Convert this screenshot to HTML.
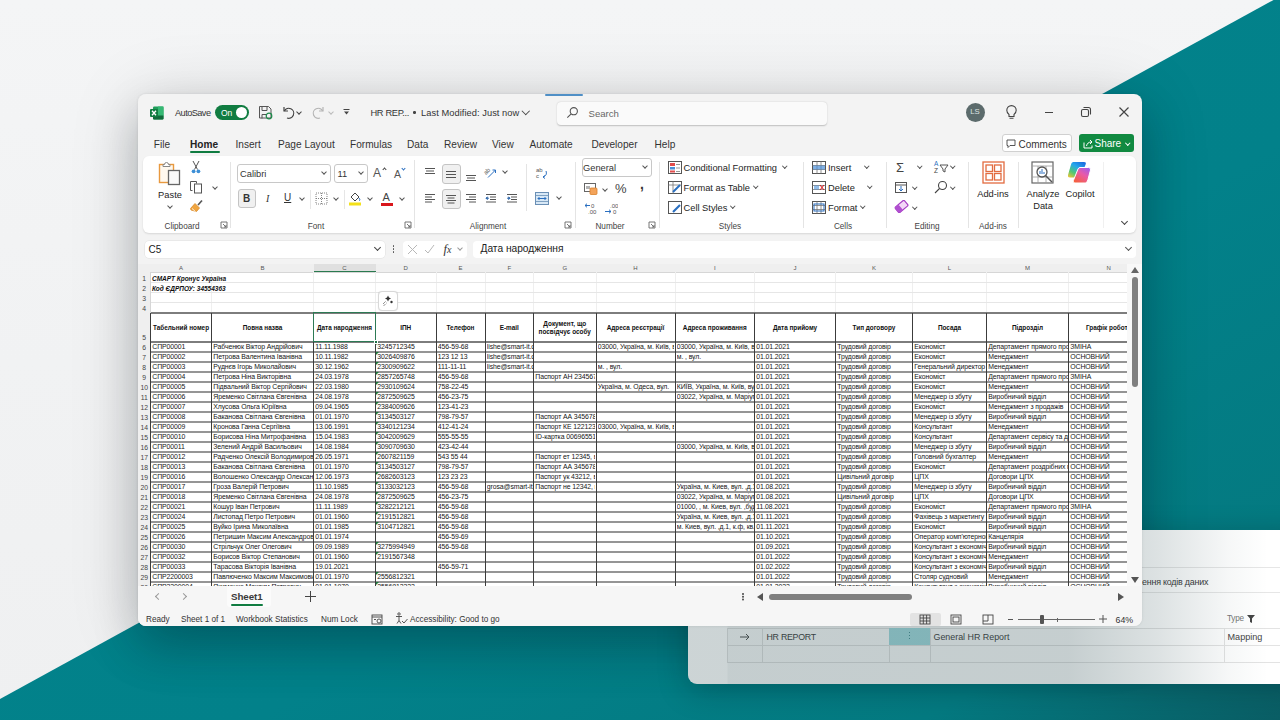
<!DOCTYPE html>
<html><head><meta charset="utf-8">
<style>
*{box-sizing:border-box;margin:0;padding:0}
html,body{width:1280px;height:720px;overflow:hidden}
body{position:relative;font-family:"Liberation Sans",sans-serif;background:linear-gradient(180deg,#f4f5f6 0%,#f1f2f3 50%,#eff0f1 100%);color:#242424}
.abs{position:absolute}
#teal{position:absolute;left:0;top:0;width:1280px;height:720px;background:linear-gradient(to bottom right,#03848c 0%,#02818a 60%,#047a81 86%,#0a5e65 100%);clip-path:polygon(1273.5px 0,1280px 0,1280px 720px,0 720px,0 699px)}
#back{position:absolute;left:688px;top:530px;width:620px;height:153.5px;background:#fff;border-radius:9px;overflow:hidden;box-shadow:0 6px 30px rgba(0,20,25,.28)}
#win{position:absolute;left:138px;top:94px;width:1004px;height:532px;background:#f3f3f3;border-radius:8px;overflow:hidden;box-shadow:0 0 3px rgba(0,0,0,.10)}
#winshadow{position:absolute;left:138px;top:94px;width:1004px;height:532px;border-radius:8px;box-shadow:0 6px 70px rgba(0,0,0,.15),0 22px 45px rgba(0,25,30,.22)}
.ui{position:absolute;white-space:nowrap;font-size:9.3px;color:#242424;line-height:1}
.tab{position:absolute;top:46px;font-size:10.1px;color:#333;line-height:1}
#ribbon{position:absolute;left:5px;top:62px;width:993px;height:77px;background:#fff;border-radius:6px;box-shadow:0 1px 2px rgba(0,0,0,.12)}
.glab{position:absolute;top:129px;font-size:8.2px;color:#444;line-height:1;transform:translateX(-50%);white-space:nowrap}
.sep{position:absolute;top:6px;width:1px;height:64px;background:#e4e4e4}
.rt{position:absolute;font-size:9.3px;color:#242424;line-height:1;white-space:nowrap}
.chev{position:absolute;width:5px;height:5px;border-right:1.1px solid #555;border-bottom:1.1px solid #555;transform:rotate(45deg)}
#grid{position:absolute;left:0;top:170px;width:989px;height:322px;overflow:hidden;background:#fff}
#grid div{position:absolute}
.ch{top:0;height:8px;font-size:6px;color:#555;text-align:center;line-height:8.5px}
.rh{left:0;width:12.5px;font-size:6.8px;color:#444;text-align:center;display:flex;align-items:flex-end;justify-content:center;padding-bottom:0;line-height:1}
.t{font-size:6.5px;line-height:12px;white-space:nowrap;color:#111}
.bi{font-weight:bold;font-style:italic}
.hd{display:flex;align-items:center;padding-top:1px;justify-content:center;text-align:center;font-size:6.4px;font-weight:bold;line-height:8px;color:#111;overflow:hidden;white-space:nowrap}
.c{font-size:6.9px;letter-spacing:-0.1px;line-height:10.5px;white-space:nowrap;overflow:hidden;color:#151515;height:11px}
.tri{width:0;height:0;border-top:3px solid #1e7a3c;border-right:3px solid transparent}
.hl{left:12.5px;width:980px;height:1px}
.lg{background:#e6e6e6}
.vl{width:1px}
.vl.lg{background:#efefef}
.hl.dk{background:#959595;height:1.5px}
.hl.dk.thick{background:#7d7d7d;height:1.6px}
.vl.dv{background:#3c3c3c}
</style></head><body>
<div id="teal"></div>
<div id="winshadow"></div>
<div id="back">
  <div class="abs" style="left:0;top:37px;width:600px;height:1px;background:#e6e6e6"></div>
  <div class="abs" style="left:0;top:62px;width:600px;height:1px;background:#e6e6e6"></div>
  <div class="abs" style="left:454px;top:47.5px;font-size:8.9px;letter-spacing:-0.2px;color:#3a3a3a;white-space:nowrap;line-height:1">ення кодів даних</div>
  <div class="abs" style="left:539px;top:85px;font-size:8.2px;color:#777;letter-spacing:-0.2px;white-space:nowrap;line-height:1">Type</div>
  <svg class="abs" style="left:558.5px;top:84.5px" width="8" height="8" viewBox="0 0 8 8"><path d="M0 0h8L5 3.5V8L3 7V3.5z" fill="#444"/></svg>
  <div class="abs" style="left:39px;top:97.5px;width:600px;height:1px;background:#e3e3e3"></div>
  <div class="abs" style="left:39px;top:115px;width:600px;height:1px;background:#e3e3e3"></div>
  <div class="abs" style="left:39px;top:132px;width:600px;height:1px;background:#e3e3e3"></div>
  <div class="abs" style="left:39px;top:98px;width:1px;height:34px;background:#e3e3e3"></div>
  <div class="abs" style="left:74px;top:98px;width:1px;height:34px;background:#e3e3e3"></div>
  <div class="abs" style="left:200.5px;top:98px;width:1px;height:34px;background:#e3e3e3"></div>
  <div class="abs" style="left:241.5px;top:98px;width:1px;height:34px;background:#e3e3e3"></div>
  <div class="abs" style="left:535.5px;top:98px;width:1px;height:34px;background:#e3e3e3"></div>
  <div class="abs" style="left:200.5px;top:98px;width:41px;height:17px;background:#a6dde1"></div>
  <div class="abs" style="left:220.5px;top:101.5px;width:1.4px;height:1.4px;background:#2f7b80;border-radius:50%;box-shadow:0 3px 0 #2f7b80,0 6px 0 #2f7b80"></div>
  <svg class="abs" style="left:52px;top:102.5px" width="10" height="8" viewBox="0 0 10 8" fill="none" stroke="#555" stroke-width="1"><path d="M0 4h9M6 1l3 3-3 3"/></svg>
  <div class="abs" style="left:78.5px;top:102.5px;font-size:8.8px;letter-spacing:-0.25px;color:#444;white-space:nowrap;line-height:1">HR REPORT</div>
  <div class="abs" style="left:245.5px;top:102.5px;font-size:8.9px;color:#444;white-space:nowrap;line-height:1">General HR Report</div>
  <div class="abs" style="left:539.5px;top:102.5px;font-size:9.1px;color:#444;white-space:nowrap;line-height:1">Mapping</div>
  <div class="abs" style="left:0;top:0;width:600px;height:160px;background:linear-gradient(90deg,rgba(25,60,65,.22) 0px,rgba(25,60,65,.22) 39px,rgba(25,60,65,.255) 40px,rgba(25,60,65,.25) 380px,rgba(25,60,65,.15) 470px,rgba(25,60,65,.04) 540px,rgba(25,60,65,0) 580px)"></div>
</div>
<div id="win">

  <!-- title bar -->
  <div class="abs" style="left:407px;top:0;width:38px;height:2px;background:#4f8fc6;border-radius:1px"></div>
  <svg class="abs" style="left:12px;top:12px" width="14" height="14" viewBox="0 0 14 14">
    <rect x="3" y="0.5" width="10.5" height="13" rx="1.2" fill="#1f9d5a"/>
    <rect x="3" y="9" width="10.5" height="4.5" rx="1" fill="#0f6a3a"/>
    <rect x="8" y="0.5" width="5.5" height="9" fill="#35b873"/>
    <rect x="0" y="3" width="8" height="8" rx="1" fill="#107c41"/>
    <path d="M2 4.8 L6 9.2 M6 4.8 L2 9.2" stroke="#fff" stroke-width="1.3"/>
  </svg>
  <div class="ui" style="left:37px;top:14.5px;font-size:9.2px;letter-spacing:-0.55px;color:#333">AutoSave</div>
  <div class="abs" style="left:77px;top:11px;width:34px;height:15px;border-radius:8px;background:#107c41"></div>
  <div class="ui" style="left:83px;top:15px;font-size:8.5px;color:#fff">On</div>
  <div class="abs" style="left:98px;top:13px;width:11px;height:11px;border-radius:50%;background:#fff"></div>
  <svg class="abs" style="left:120px;top:11px" width="15" height="15" viewBox="0 0 15 15" fill="none" stroke="#555" stroke-width="1">
    <path d="M1.5 1.5h9l2.5 2.5v9h-11.5z"/><path d="M4 1.5v4h5v-4"/><path d="M4 13.5v-4h4"/>
    <circle cx="11" cy="11" r="2.8" stroke="#1d8a4a" stroke-width="1.2"/>
  </svg>
  <svg class="abs" style="left:143px;top:11px" width="15" height="15" viewBox="0 0 15 15" fill="none" stroke="#444" stroke-width="1.2">
    <path d="M3 2v4h4"/><path d="M3.3 6A5 5 0 1 1 6 13"/>
  </svg>
  <div class="chev" style="left:159px;top:15.5px;width:4px;height:4px;border-color:#444"></div>
  <svg class="abs" style="left:173px;top:11px" width="15" height="15" viewBox="0 0 15 15" fill="none" stroke="#b5b5b5" stroke-width="1.2">
    <path d="M12 2v4h-4"/><path d="M11.7 6A5 5 0 1 0 9 13"/>
  </svg>
  <div class="chev" style="left:191px;top:15.5px;width:4px;height:4px;border-color:#bbb"></div>
  <svg class="abs" style="left:204px;top:13px" width="9" height="9" viewBox="0 0 9 9"><path d="M1.5 2.5h6" stroke="#444" stroke-width="1"/><path d="M2 4.5h5l-2.5 3z" fill="#444"/></svg>
  <div class="ui" style="left:232.5px;top:14.5px;letter-spacing:-0.35px;color:#333">HR REP...</div>
  <div class="abs" style="left:275px;top:17px;width:2.5px;height:2.5px;border-radius:50%;background:#444"></div>
  <div class="ui" style="left:283px;top:14.5px;letter-spacing:0.05px;color:#333">Last Modified: Just now</div>
  <div class="chev" style="left:385px;top:14px;width:5.5px;height:5.5px;border-color:#444;border-width:0 1.2px 1.2px 0"></div>
  <div class="abs" style="left:418.5px;top:7.5px;width:270px;height:23px;border-radius:4px;background:#fafafa;box-shadow:0 0.5px 1.5px rgba(0,0,0,.22)"></div>
  <svg class="abs" style="left:428px;top:12px" width="13" height="13" viewBox="0 0 13 13" fill="none" stroke="#555" stroke-width="1.1">
    <circle cx="7.8" cy="5.2" r="3.6"/><path d="M5.2 7.8L1.3 11.7"/>
  </svg>
  <div class="ui" style="left:450.5px;top:14.5px;font-size:9.6px;color:#666">Search</div>
  <div class="abs" style="left:827.5px;top:8.5px;width:19px;height:19px;border-radius:50%;background:#5c6b6c"></div>
  <div class="ui" style="left:827.5px;top:14px;width:19px;text-align:center;font-size:7.8px;color:#dfe3e3">LS</div>
  <svg class="abs" style="left:867px;top:10px" width="13" height="16" viewBox="0 0 13 16" fill="none" stroke="#444" stroke-width="1.1">
    <path d="M4 10.5C2.6 9.4 1.8 8 1.8 6.3a4.7 4.7 0 0 1 9.4 0c0 1.7-.8 3.1-2.2 4.2v2H4z"/><path d="M4.5 14.2h4"/>
  </svg>
  <div class="abs" style="left:906.5px;top:17.5px;width:8.5px;height:1.1px;background:#444"></div>
  <svg class="abs" style="left:942px;top:12px" width="12" height="12" viewBox="0 0 12 12" fill="none" stroke="#444" stroke-width="1.1">
    <rect x="1.5" y="3.5" width="7" height="7" rx="1.5"/><path d="M3.5 1.5h5a2 2 0 0 1 2 2v5"/>
  </svg>
  <svg class="abs" style="left:980px;top:12px" width="12" height="12" viewBox="0 0 12 12" stroke="#444" stroke-width="1.2">
    <path d="M1.5 1.5l9 9M10.5 1.5l-9 9"/>
  </svg>
  <!-- tabs -->
  <div class="tab" style="left:15.75px">File</div>
  <div class="tab" style="left:52px;font-weight:bold;color:#222">Home</div>
  <div class="abs" style="left:52px;top:57px;width:30px;height:2px;border-radius:1px;background:#107c41"></div>
  <div class="tab" style="left:97.5px">Insert</div>
  <div class="tab" style="left:140px">Page Layout</div>
  <div class="tab" style="left:212px">Formulas</div>
  <div class="tab" style="left:269px">Data</div>
  <div class="tab" style="left:306px">Review</div>
  <div class="tab" style="left:354px">View</div>
  <div class="tab" style="left:391.5px">Automate</div>
  <div class="tab" style="left:453.5px">Developer</div>
  <div class="tab" style="left:516.5px">Help</div>
  <div class="abs" style="left:863.5px;top:40px;width:70px;height:18px;border-radius:3px;background:#fff;border:1px solid #d0d0d0"></div>
  <svg class="abs" style="left:867.5px;top:44.5px" width="10" height="10" viewBox="0 0 10 10" fill="none" stroke="#444" stroke-width=".9"><path d="M1 1h8v5.5H4L2 8.5V6.5H1z"/></svg>
  <div class="ui" style="left:880.5px;top:45.5px;font-size:10px;color:#333">Comments</div>
  <div class="abs" style="left:940.5px;top:40px;width:55px;height:18px;border-radius:3px;background:#118a41"></div>
  <svg class="abs" style="left:945px;top:44px" width="11" height="11" viewBox="0 0 11 11" fill="none" stroke="#fff" stroke-width="1"><path d="M1 4.5v5.5h8V7.5"/><path d="M3.5 8C4 5.5 5.5 4 8.5 4"/><path d="M7 2l2 2-2 2"/></svg>
  <div class="ui" style="left:956.5px;top:45.3px;font-size:10px;color:#fff">Share</div>
  <div class="chev" style="left:988px;top:47px;width:3.5px;height:3.5px;border-color:#fff"></div>
  <div id="ribbon"></div>
  <!-- ===== Clipboard ===== -->
  <svg class="abs" style="left:20px;top:66px" width="24" height="26" viewBox="0 0 24 26" fill="none">
    <rect x="1.5" y="4.5" width="14" height="18" fill="#fff8ee" stroke="#e8993f" stroke-width="1.4"/>
    <path d="M5 6.5V4.5h1.5a2 2 0 0 1 4 0H12v2z" fill="#fff" stroke="#888" stroke-width="1"/>
    <rect x="10.5" y="10.5" width="11" height="14" fill="#fafafa" stroke="#666" stroke-width="1.3"/>
  </svg>
  <div class="rt" style="left:32px;top:97px;transform:translateX(-50%);font-size:9.3px">Paste</div>
  <div class="chev" style="left:29.5px;top:109.5px;width:4px;height:4px"></div>
  <svg class="abs" style="left:52px;top:66px" width="12" height="14" viewBox="0 0 12 14" fill="none">
    <path d="M4.5 9.5L9 1M7.5 9.5L3 1" stroke="#555" stroke-width="1"/>
    <circle cx="3.6" cy="11.3" r="1.9" fill="#3d8fd6"/><circle cx="8.4" cy="11.3" r="1.9" fill="#3d8fd6"/>
  </svg>
  <svg class="abs" style="left:51px;top:86px" width="14" height="14" viewBox="0 0 14 14" fill="none" stroke="#555" stroke-width="1">
    <path d="M3.5 10.5h-2v-9h6v2"/><rect x="5.5" y="4" width="7" height="9"/>
  </svg>
  <div class="chev" style="left:75px;top:91px;width:4px;height:4px"></div>
  <svg class="abs" style="left:51px;top:105px" width="15" height="15" viewBox="0 0 15 15" fill="none">
    <path d="M9 6l4-4.5" stroke="#555" stroke-width="1.6"/>
    <path d="M6 4.5l4.5 4.5-3 3.5L2 11l-0.5-1.5z" fill="#f0a540" stroke="#d98a2a" stroke-width=".8"/>
    <path d="M3 9.5l3.5 3" stroke="#fff" stroke-width=".8"/>
  </svg>
  <div class="glab" style="left:44px">Clipboard</div>
  <svg class="abs" style="left:82px;top:127px" width="8" height="8" viewBox="0 0 8 8" fill="none" stroke="#666" stroke-width=".9"><path d="M1 7V1h6v6z"/><path d="M3 3l3 3M6 4v2H4"/></svg>
  <div class="sep" style="left:92px;top:68px;height:66px"></div>
  <!-- ===== Font ===== -->
  <div class="abs" style="left:99px;top:70px;width:94px;height:19px;border:1px solid #c8c8c8;border-radius:3px;background:#fff"></div>
  <div class="rt" style="left:102px;top:76px;font-size:9.3px;color:#333">Calibri</div>
  <div class="chev" style="left:184px;top:76px;width:4px;height:4px"></div>
  <div class="abs" style="left:195.5px;top:70px;width:34px;height:19px;border:1px solid #c8c8c8;border-radius:3px;background:#fff"></div>
  <div class="rt" style="left:199.5px;top:76px;font-size:9.3px;color:#333">11</div>
  <div class="chev" style="left:221px;top:75.5px;width:4px;height:4px"></div>
  <div class="rt" style="left:235px;top:73px;font-size:12px;color:#555">A</div>
  <div class="chev" style="left:244.5px;top:74px;width:3px;height:3px;transform:rotate(-135deg);border-color:#444"></div>
  <div class="rt" style="left:256px;top:75px;font-size:10.5px;color:#555">A</div>
  <div class="chev" style="left:264px;top:72.5px;width:3px;height:3px;border-color:#2a6fc0"></div>
  <div class="abs" style="left:100px;top:95px;width:18px;height:19px;border:1px solid #c4c4c4;border-radius:3px;background:#f0f0f0"></div>
  <div class="rt" style="left:105px;top:99.5px;font-size:10px;font-weight:bold;color:#333">B</div>
  <div class="rt" style="left:128px;top:99.5px;font-size:10px;font-style:italic;font-family:'Liberation Serif',serif;color:#333">I</div>
  <div class="rt" style="left:146px;top:99px;font-size:10px;color:#333;text-decoration:underline">U</div>
  <div class="chev" style="left:162px;top:102px;width:4px;height:4px"></div>
  <div class="abs" style="left:172px;top:96px;width:1px;height:19px;background:#e6e6e6"></div>
  <div class="abs" style="left:206px;top:96px;width:1px;height:19px;background:#e6e6e6"></div>
  <svg class="abs" style="left:177px;top:98px" width="13" height="13" viewBox="0 0 13 13" fill="none" stroke="#777" stroke-width=".9" stroke-dasharray="1 1"><rect x="1" y="1" width="11" height="11"/><path d="M6.5 1v11M1 6.5h11"/></svg>
  <div class="chev" style="left:196px;top:102px;width:4px;height:4px"></div>
  <svg class="abs" style="left:210px;top:96px" width="14" height="16" viewBox="0 0 14 16" fill="none">
    <path d="M3 7l4-4 4 4-4 4z" stroke="#444" stroke-width="1"/><path d="M11 8c1 1.4 1.3 2.3 0 2.6" stroke="#2a6fc0" stroke-width="1"/>
    <rect x="1" y="12.5" width="12" height="3" fill="#f4e11a"/>
  </svg>
  <div class="chev" style="left:230px;top:102px;width:4px;height:4px"></div>
  <div class="rt" style="left:244.5px;top:97.5px;font-size:11px;color:#444">A</div>
  <div class="abs" style="left:243px;top:108.5px;width:12px;height:3px;background:#d9161c"></div>
  <div class="chev" style="left:262px;top:102px;width:4px;height:4px"></div>
  <div class="glab" style="left:178px">Font</div>
  <svg class="abs" style="left:266px;top:127px" width="8" height="8" viewBox="0 0 8 8" fill="none" stroke="#666" stroke-width=".9"><path d="M1 7V1h6v6z"/><path d="M3 3l3 3M6 4v2H4"/></svg>
  <div class="sep" style="left:276px;top:66px;height:68px"></div>
  <!-- ===== Alignment ===== -->
  <svg class="abs" style="left:286px;top:73px" width="12" height="8" viewBox="0 0 12 8" stroke="#555" stroke-width="1"><path d="M1 1.5h10M2 4h8M1 6.5h10"/></svg>
  <div class="abs" style="left:303.5px;top:70px;width:19px;height:19.5px;border:1px solid #c4c4c4;border-radius:3px;background:#f0f0f0"></div>
  <svg class="abs" style="left:307px;top:75.5px" width="12" height="9" viewBox="0 0 12 9" stroke="#555" stroke-width="1"><path d="M1 1.5h10M1 4.5h10M1 7.5h10"/></svg>
  <svg class="abs" style="left:327px;top:80px" width="12" height="8" viewBox="0 0 12 8" stroke="#555" stroke-width="1"><path d="M1 1.5h10M2 4h8M1 6.5h10"/></svg>
  <svg class="abs" style="left:345px;top:71px" width="15" height="14" viewBox="0 0 15 14" fill="none" stroke-width="1"><text x="0" y="0" font-size="6" font-family="Liberation Sans" fill="#555" transform="translate(3 10) rotate(-45)">ab</text><path d="M5 12.5L12.5 5M12.5 5h-3M12.5 5v3" stroke="#2a6fc0"/></svg>
  <div class="chev" style="left:365px;top:75px;width:4px;height:4px"></div>
  <div class="abs" style="left:388px;top:70px;width:1px;height:47px;background:#e4e4e4"></div>
  <svg class="abs" style="left:286px;top:99px" width="12" height="10" viewBox="0 0 12 10" stroke="#555" stroke-width="1"><path d="M1 1.5h10M1 4h7M1 6.5h10M1 9h7"/></svg>
  <div class="abs" style="left:303.5px;top:95px;width:19px;height:19.5px;border:1px solid #c4c4c4;border-radius:3px;background:#f0f0f0"></div>
  <svg class="abs" style="left:307px;top:99.5px" width="12" height="10" viewBox="0 0 12 10" stroke="#555" stroke-width="1"><path d="M1 1.5h10M2.5 4h7M1 6.5h10M2.5 9h7"/></svg>
  <svg class="abs" style="left:327px;top:99px" width="12" height="10" viewBox="0 0 12 10" stroke="#555" stroke-width="1"><path d="M1 1.5h10M4 4h7M1 6.5h10M4 9h7"/></svg>
  <svg class="abs" style="left:347px;top:99px" width="12" height="10" viewBox="0 0 12 10" stroke-width="1"><path d="M1 1.5h10M5 4h6M5 6.5h6M1 9h10" stroke="#555"/><path d="M4 5.2H1M2.5 3.7L1 5.2l1.5 1.5" stroke="#2a6fc0"/></svg>
  <svg class="abs" style="left:368px;top:99px" width="12" height="10" viewBox="0 0 12 10" stroke-width="1"><path d="M1 1.5h10M5 4h6M5 6.5h6M1 9h10" stroke="#555"/><path d="M1 5.2h3M2.5 3.7L4 5.2l-1.5 1.5" stroke="#2a6fc0"/></svg>
  <svg class="abs" style="left:397px;top:72px" width="13" height="15" viewBox="0 0 13 15" fill="none"><text x="1" y="6" font-size="6" font-family="Liberation Sans" fill="#555">ab</text><text x="1" y="12" font-size="6" font-family="Liberation Sans" fill="#555">c</text><path d="M11 5c1 3 0 5-3 6M8 11l2-1.5M8 11l2 1.5" stroke="#2a6fc0" stroke-width="1"/></svg>
  <svg class="abs" style="left:397px;top:98px" width="14" height="13" viewBox="0 0 14 13" fill="none"><rect x="0.5" y="0.5" width="13" height="12" fill="#d8e8f6" stroke="#6a8fb5" stroke-width="1"/><path d="M0.5 3.5h13M0.5 9.5h13" stroke="#6a8fb5" stroke-width=".8"/><path d="M3 6.5h8M3 6.5l1.5-1.5M3 6.5l1.5 1.5M11 6.5l-1.5-1.5M11 6.5l-1.5 1.5" stroke="#2a6fc0" stroke-width="1"/></svg>
  <div class="chev" style="left:418.5px;top:100.5px;width:4px;height:4px"></div>
  <div class="glab" style="left:350px">Alignment</div>
  <svg class="abs" style="left:426px;top:127px" width="8" height="8" viewBox="0 0 8 8" fill="none" stroke="#666" stroke-width=".9"><path d="M1 7V1h6v6z"/><path d="M3 3l3 3M6 4v2H4"/></svg>
  <div class="sep" style="left:437px;top:68px;height:66px"></div>
  <!-- ===== Number ===== -->
  <div class="abs" style="left:443.5px;top:64px;width:70px;height:19px;border:1px solid #c8c8c8;border-radius:3px;background:#fff"></div>
  <div class="rt" style="left:445px;top:70px;font-size:9.3px;color:#333">General</div>
  <div class="chev" style="left:505px;top:69.5px;width:4px;height:4px"></div>
  <svg class="abs" style="left:446px;top:89px" width="14" height="12" viewBox="0 0 14 12" fill="none"><rect x=".5" y=".5" width="11" height="8" stroke="#666" stroke-width="1"/><path d="M3 3v3M5 3v3" stroke="#666"/><rect x="6" y="5" width="7" height="6.5" rx="1" fill="#f3a35a" stroke="#d9822b" stroke-width=".8"/></svg>
  <div class="chev" style="left:464.5px;top:92.5px;width:4px;height:4px"></div>
  <div class="rt" style="left:477px;top:88px;font-size:13px;color:#444">%</div>
  <div class="rt" style="left:502px;top:83px;font-size:14px;font-weight:bold;color:#333">,</div>
  <svg class="abs" style="left:446px;top:108px" width="14" height="13" viewBox="0 0 14 13" fill="none"><text x="7" y="5.5" font-size="6" font-family="Liberation Sans" fill="#555">0</text><text x="4" y="12" font-size="6" font-family="Liberation Sans" fill="#555">.00</text><path d="M1 3.5h5M1 3.5l2-1.8M1 3.5l2 1.8" stroke="#2a6fc0" stroke-width="1"/></svg>
  <svg class="abs" style="left:466px;top:108px" width="14" height="13" viewBox="0 0 14 13" fill="none"><text x="6" y="5.5" font-size="6" font-family="Liberation Sans" fill="#555">.00</text><text x="9" y="12" font-size="6" font-family="Liberation Sans" fill="#555">0</text><path d="M1 9.5h6M7 9.5l-2-1.8M7 9.5l-2 1.8" stroke="#2a6fc0" stroke-width="1"/></svg>
  <div class="glab" style="left:472px">Number</div>
  <svg class="abs" style="left:510px;top:127px" width="8" height="8" viewBox="0 0 8 8" fill="none" stroke="#666" stroke-width=".9"><path d="M1 7V1h6v6z"/><path d="M3 3l3 3M6 4v2H4"/></svg>
  <div class="sep" style="left:521px;top:68px;height:66px"></div>
  <!-- ===== Styles ===== -->
  <svg class="abs" style="left:530px;top:67px" width="14" height="13" viewBox="0 0 14 13" fill="none"><rect x=".5" y=".5" width="13" height="12" fill="#fff" stroke="#555" stroke-width="1"/><rect x="2" y="2" width="5" height="3" fill="#e24c4c"/><rect x="2" y="6" width="5" height="2.5" fill="#4a8fd8"/><rect x="2" y="9.5" width="5" height="2" fill="#e24c4c"/><path d="M8 3.5h4M8 7h4M8 10.5h4" stroke="#999"/></svg>
  <div class="rt" style="left:545.5px;top:69.5px">Conditional Formatting</div>
  <div class="chev" style="left:645px;top:70px;width:3.5px;height:3.5px"></div>
  <svg class="abs" style="left:530px;top:87px" width="14" height="13" viewBox="0 0 14 13" fill="none"><rect x=".5" y=".5" width="13" height="12" fill="#fff" stroke="#555" stroke-width="1"/><path d="M.5 4h13M5 .5v12" stroke="#777" stroke-width=".8"/><path d="M5 11l7-7" stroke="#2a6fc0" stroke-width="2"/></svg>
  <div class="rt" style="left:545.5px;top:89.5px">Format as Table</div>
  <div class="chev" style="left:616px;top:90px;width:3.5px;height:3.5px"></div>
  <svg class="abs" style="left:530px;top:107px" width="14" height="13" viewBox="0 0 14 13" fill="none"><rect x=".5" y=".5" width="13" height="12" fill="#fff" stroke="#555" stroke-width="1"/><path d="M5 11l7-7" stroke="#2a6fc0" stroke-width="2.2"/></svg>
  <div class="rt" style="left:545.5px;top:109.5px">Cell Styles</div>
  <div class="chev" style="left:592.5px;top:110px;width:3.5px;height:3.5px"></div>
  <div class="glab" style="left:592px">Styles</div>
  <div class="sep" style="left:665px;top:68px;height:66px"></div>
  <!-- ===== Cells ===== -->
  <svg class="abs" style="left:674px;top:67px" width="14" height="13" viewBox="0 0 14 13" fill="none"><rect x=".5" y=".5" width="13" height="12" fill="#fff" stroke="#555" stroke-width="1"/><path d="M.5 4.5h13M.5 8.5h13M5 .5v12M9 .5v12" stroke="#777" stroke-width=".8"/><rect x="1" y="4.5" width="12" height="4" fill="#4a8fd8" opacity=".7"/></svg>
  <div class="rt" style="left:690px;top:69.5px">Insert</div>
  <div class="chev" style="left:727px;top:70px;width:3.5px;height:3.5px"></div>
  <svg class="abs" style="left:674px;top:87px" width="14" height="13" viewBox="0 0 14 13" fill="none"><rect x=".5" y=".5" width="13" height="12" fill="#fff" stroke="#555" stroke-width="1"/><path d="M.5 4.5h13M.5 8.5h13" stroke="#777" stroke-width=".8"/><path d="M8 4l4 5M12 4l-4 5" stroke="#d9161c" stroke-width="1"/><rect x="2" y="4.5" width="5" height="4" fill="#4a8fd8" opacity=".6"/></svg>
  <div class="rt" style="left:690px;top:89.5px">Delete</div>
  <div class="chev" style="left:730px;top:90px;width:3.5px;height:3.5px"></div>
  <svg class="abs" style="left:674px;top:107px" width="14" height="13" viewBox="0 0 14 13" fill="none"><rect x=".5" y=".5" width="13" height="12" fill="#fff" stroke="#555" stroke-width="1"/><path d="M.5 4.5h13M.5 8.5h13M5 .5v12M9 .5v12" stroke="#777" stroke-width=".8"/><rect x="2" y="3" width="10" height="7" fill="none" stroke="#2a6fc0" stroke-width="1"/></svg>
  <div class="rt" style="left:690px;top:109.5px">Format</div>
  <div class="chev" style="left:723px;top:110px;width:3.5px;height:3.5px"></div>
  <div class="glab" style="left:705px">Cells</div>
  <div class="sep" style="left:748px;top:68px;height:66px"></div>
  <!-- ===== Editing ===== -->
  <div class="rt" style="left:758px;top:66.5px;font-size:13px;color:#444">&#931;</div>
  <div class="chev" style="left:779.5px;top:70px;width:3.5px;height:3.5px"></div>
  <svg class="abs" style="left:795px;top:66px" width="16" height="14" viewBox="0 0 16 14" fill="none"><text x="1" y="6" font-size="6.5" font-family="Liberation Sans" fill="#2a6fc0">A</text><text x="1" y="13" font-size="6.5" font-family="Liberation Sans" fill="#444">Z</text><path d="M7 5h8l-3 4v3l-2-1V9z" stroke="#444" stroke-width=".9"/></svg>
  <div class="chev" style="left:813px;top:70px;width:3.5px;height:3.5px"></div>
  <svg class="abs" style="left:757px;top:88px" width="12" height="11" viewBox="0 0 12 11" fill="none"><rect x=".5" y=".5" width="11" height="10" fill="#fff" stroke="#555"/><path d="M.5 3h11" stroke="#555"/><path d="M6 4v5M4 7l2 2 2-2" stroke="#2a6fc0"/></svg>
  <div class="chev" style="left:774.5px;top:91px;width:3.5px;height:3.5px"></div>
  <svg class="abs" style="left:796px;top:86px" width="14" height="14" viewBox="0 0 14 14" fill="none" stroke="#444" stroke-width="1.1"><circle cx="8.5" cy="5.5" r="4"/><path d="M5.5 8.5L1 13"/></svg>
  <div class="chev" style="left:813px;top:91px;width:3.5px;height:3.5px"></div>
  <svg class="abs" style="left:756px;top:106px" width="15" height="13" viewBox="0 0 15 13" fill="none"><g transform="rotate(-40 7.5 6.5)"><rect x="1.5" y="3" width="12" height="7" rx="1.2" fill="#f3d7f7" stroke="#a63cc4" stroke-width="1.2"/><rect x="1.5" y="3" width="5" height="7" rx="1.2" fill="#b04fd0"/></g></svg>
  <div class="chev" style="left:774.5px;top:111px;width:3.5px;height:3.5px"></div>
  <div class="glab" style="left:789px">Editing</div>
  <div class="sep" style="left:830px;top:68px;height:66px"></div>
  <!-- ===== Add-ins ===== -->
  <svg class="abs" style="left:844px;top:67px" width="23" height="23" viewBox="0 0 23 23" fill="none" stroke="#e26b3f" stroke-width="1.3"><rect x="1" y="1" width="21" height="21"/><rect x="4" y="4" width="6.5" height="6.5"/><rect x="12.5" y="4" width="6.5" height="6.5"/><rect x="4" y="12.5" width="6.5" height="6.5"/><rect x="12.5" y="12.5" width="6.5" height="6.5"/></svg>
  <div class="rt" style="left:855px;top:96px;transform:translateX(-50%)">Add-ins</div>
  <div class="glab" style="left:855px">Add-ins</div>
  <div class="sep" style="left:880px;top:68px;height:66px"></div>
  <!-- ===== Analyze / Copilot ===== -->
  <svg class="abs" style="left:893px;top:67px" width="23" height="23" viewBox="0 0 23 23" fill="none"><rect x="1" y="1" width="21" height="21" stroke="#666" stroke-width="1.2"/><path d="M1 5h21M1 16h21M7 5v17M15 5v17" stroke="#999" stroke-width=".8"/><circle cx="11" cy="11" r="5" fill="#fff" stroke="#555" stroke-width="1.3"/><path d="M14.5 14.5L21 21" stroke="#555" stroke-width="1.5"/><path d="M9 13V10M11 13V8M13 13v-2" stroke="#2a6fc0" stroke-width="1"/></svg>
  <div class="rt" style="left:905px;top:96px;transform:translateX(-50%)">Analyze</div>
  <div class="rt" style="left:905px;top:108px;transform:translateX(-50%)">Data</div>
  <svg class="abs" style="left:929px;top:66px" width="25" height="25" viewBox="0 0 25 25">
    <defs>
      <linearGradient id="cpa" x1="0.8" y1="0" x2="0.1" y2="1"><stop offset="0" stop-color="#1b6fe0"/><stop offset=".35" stop-color="#24a8ec"/><stop offset=".7" stop-color="#52c872"/><stop offset="1" stop-color="#e9c53a"/></linearGradient>
      <linearGradient id="cpb" x1="0.9" y1="0" x2="0.2" y2="1"><stop offset="0" stop-color="#9a5cf0"/><stop offset=".45" stop-color="#e95aa8"/><stop offset="1" stop-color="#f5603a"/></linearGradient>
    </defs>
    <path d="M6.5 2H17Q19.5 2 18.7 4.3L14 16Q13.3 17.5 11.5 17.5H3Q0.5 17.5 1 15L3.8 5.2Q4.6 2 6.5 2Z" fill="url(#cpa)"/>
    <path d="M13 7.5H21.5Q24 7.5 23.5 10L20.9 19.8Q20.1 23 18.3 23H8Q5.5 23 6.3 20.7L11 9Q11.7 7.5 13 7.5Z" fill="url(#cpb)" stroke="#fff" stroke-width="1"/>
  </svg>
  <div class="rt" style="left:942px;top:96px;transform:translateX(-50%)">Copilot</div>
  <div class="sep" style="left:965px;top:68px;height:66px;background:#f0f0f0"></div>
  <div class="chev" style="left:984px;top:125px;width:5px;height:5px;border-color:#444"></div>


  <!-- formula bar -->
  <div class="abs" style="left:7px;top:147px;width:240px;height:17px;border-radius:4px;background:#fff;box-shadow:0 0 0 .5px #e0e0e0"></div>
  <div class="ui" style="left:10.5px;top:150.5px;font-size:10px;color:#222">C5</div>
  <div class="chev" style="left:237px;top:151px;width:5px;height:5px;border-color:#444"></div>
  <div class="abs" style="left:254.5px;top:151px;width:1.6px;height:1.6px;background:#555;border-radius:50%;box-shadow:0 3px 0 #555,0 6px 0 #555"></div>
  <div class="abs" style="left:265px;top:147px;width:64px;height:17px;border-radius:4px;background:#fff"></div>
  <svg class="abs" style="left:269px;top:150px" width="11" height="11" viewBox="0 0 11 11" stroke="#b8b8b8" stroke-width="1"><path d="M1 1l9 9M10 1l-9 9"/></svg>
  <svg class="abs" style="left:286px;top:150px" width="11" height="11" viewBox="0 0 11 11" fill="none" stroke="#b8b8b8" stroke-width="1"><path d="M1 6l3 3 6-8"/></svg>
  <div class="ui" style="left:305.5px;top:148.5px;font-size:12.5px;font-style:italic;font-family:'Liberation Serif',serif;color:#333">f<span style="font-size:10px">x</span></div>
  <div class="chev" style="left:319.5px;top:151.5px;width:4px;height:4px;border-color:#999"></div>
  <div class="abs" style="left:335px;top:147px;width:663px;height:17px;border-radius:4px;background:#fff"></div>
  <div class="ui" style="left:342.5px;top:150px;font-size:10.2px;color:#222">Дата народження</div>
  <div class="chev" style="left:987.5px;top:151px;width:5px;height:5px;border-color:#555"></div>
  <!-- sheet tabs -->
  <div class="abs" style="left:0;top:492px;width:1004px;height:40px;background:#f6f6f6"></div>
  <div class="chev" style="left:18px;top:500px;width:5px;height:5px;transform:rotate(135deg);border-color:#999"></div>
  <div class="chev" style="left:43px;top:500px;width:5px;height:5px;transform:rotate(-45deg);border-color:#999"></div>
  <div class="abs" style="left:89px;top:491.5px;width:44px;height:21px;background:#fbfbfb;border-radius:0 0 3px 3px"></div>
  <div class="ui" style="left:93px;top:497.5px;font-size:9.8px;font-weight:bold;color:#3a3a3a;letter-spacing:-0.1px">Sheet1</div>
  <div class="abs" style="left:93px;top:510px;width:32px;height:1.6px;background:#107c41;border-radius:1px"></div>
  <svg class="abs" style="left:167px;top:497px" width="11" height="11" viewBox="0 0 11 11" stroke="#444" stroke-width="1"><path d="M5.5 0v11M0 5.5h11"/></svg>
  <div class="abs" style="left:604px;top:499px;width:1.6px;height:1.6px;background:#555;border-radius:50%;box-shadow:0 2.8px 0 #555,0 5.6px 0 #555"></div>
  <svg class="abs" style="left:619px;top:499px" width="7" height="8" viewBox="0 0 7 8"><path d="M6 0v8L0 4z" fill="#555"/></svg>
  <div class="abs" style="left:630.5px;top:500px;width:143px;height:6px;border-radius:3px;background:#808080"></div>
  <svg class="abs" style="left:980px;top:499px" width="7" height="8" viewBox="0 0 7 8"><path d="M0 0v8L6 4z" fill="#555"/></svg>
  <!-- vertical scrollbar -->
  <div class="abs" style="left:989px;top:170px;width:15px;height:322px;background:#f8f8f8"></div>
  <svg class="abs" style="left:993px;top:173px" width="8" height="6" viewBox="0 0 8 6"><path d="M0 6h8L4 0z" fill="#666"/></svg>
  <div class="abs" style="left:993.5px;top:182.5px;width:6.5px;height:110px;border-radius:3.5px;background:#808080"></div>
  <svg class="abs" style="left:993px;top:483px" width="8" height="6" viewBox="0 0 8 6"><path d="M0 0h8L4 6z" fill="#555"/></svg>
  <!-- status bar -->
  <div class="ui" style="left:8px;top:522.3px;font-size:8.2px;color:#333">Ready</div>
  <div class="ui" style="left:43px;top:522.3px;font-size:8.2px;color:#333">Sheet 1 of 1</div>
  <div class="ui" style="left:98px;top:522.3px;font-size:8.2px;color:#333">Workbook Statistics</div>
  <div class="ui" style="left:183px;top:522.3px;font-size:8.2px;color:#333">Num Lock</div>
  <svg class="abs" style="left:233px;top:519px" width="12" height="12" viewBox="0 0 12 12" fill="none" stroke="#444" stroke-width=".9"><rect x="1" y="2" width="10" height="9"/><path d="M1 4h10M3 6.5h2"/><circle cx="8" cy="8" r="2"/></svg>
  <svg class="abs" style="left:257px;top:518px" width="13" height="13" viewBox="0 0 13 13" fill="none" stroke="#444" stroke-width=".9"><circle cx="4" cy="2" r="1.2"/><path d="M1 4.5h6M4 4.5v4l-2 3M4 8.5l2 3"/><path d="M7 9l2 2 3.5-4"/></svg>
  <div class="ui" style="left:272px;top:522.3px;font-size:8.2px;color:#333">Accessibility: Good to go</div>
  <div class="abs" style="left:771.5px;top:519px;width:31px;height:13px;background:#e3e3e3;border-radius:2px"></div>
  <svg class="abs" style="left:781px;top:520px" width="12" height="11" viewBox="0 0 12 11" fill="none" stroke="#444" stroke-width=".9"><rect x="1" y="1" width="10" height="9"/><path d="M1 4h10M1 7h10M4.3 1v9M7.6 1v9"/></svg>
  <svg class="abs" style="left:812px;top:520px" width="12" height="11" viewBox="0 0 12 11" fill="none" stroke="#444" stroke-width=".9"><rect x="1" y="1" width="10" height="9"/><rect x="3" y="3" width="6" height="5"/></svg>
  <svg class="abs" style="left:844px;top:519.5px" width="12" height="11" viewBox="0 0 12 11" fill="none" stroke="#444" stroke-width=".9"><rect x="1" y="1" width="10" height="9"/><path d="M1 7h5V1"/></svg>
  <div class="abs" style="left:870px;top:525px;width:5px;height:1px;background:#555"></div>
  <div class="abs" style="left:880px;top:525px;width:77px;height:1px;background:#666"></div>
  <div class="abs" style="left:902px;top:521px;width:4px;height:9px;background:#555;border-radius:1px"></div>
  <div class="abs" style="left:918.5px;top:523.5px;width:1px;height:4px;background:#666"></div>
  <svg class="abs" style="left:961px;top:521px" width="8" height="8" viewBox="0 0 8 8" stroke="#555" stroke-width="1"><path d="M4 0v8M0 4h8"/></svg>
  <div class="ui" style="left:977.5px;top:522px;font-size:8.8px;color:#333">64%</div>
  <div id="grid">
<div style="left:0;top:0;width:990px;height:8px;background:#efefef"></div>
<div style="left:0;top:0;width:12.5px;height:330px;background:#efefef"></div>
<div style="left:175.5px;top:0;width:62.0px;height:8px;background:#e0e0e0"></div>
<div style="left:175.5px;top:7px;width:62.0px;height:1.3px;background:#2a7a4f"></div>
<div style="left:12.5px;top:8px;width:980px;height:0.7px;background:#d6d6d6"></div>
<div style="left:12px;top:8px;width:0.7px;height:330px;background:#d6d6d6"></div>
<div class="ch" style="left:12.5px;width:61.0px">A</div>
<div class="ch" style="left:73.5px;width:102.0px">B</div>
<div class="ch" style="left:175.5px;width:62.0px">C</div>
<div class="ch" style="left:237.5px;width:60.5px">D</div>
<div class="ch" style="left:298.0px;width:49.0px">E</div>
<div class="ch" style="left:347.0px;width:48.5px">F</div>
<div class="ch" style="left:395.5px;width:62.5px">G</div>
<div class="ch" style="left:458.0px;width:79.0px">H</div>
<div class="ch" style="left:537.0px;width:79.5px">I</div>
<div class="ch" style="left:616.5px;width:81.0px">J</div>
<div class="ch" style="left:697.5px;width:77.0px">K</div>
<div class="ch" style="left:774.5px;width:74.0px">L</div>
<div class="ch" style="left:848.5px;width:82.0px">M</div>
<div class="ch" style="left:930.5px;width:80.5px">N</div>
<div class="rh" style="top:8.5px;height:10px">1</div>
<div class="rh" style="top:18.5px;height:10px">2</div>
<div class="rh" style="top:28.5px;height:10px">3</div>
<div class="rh" style="top:38.5px;height:10px">4</div>
<div class="rh" style="top:48.5px;height:29px">5</div>
<div class="rh" style="top:77.5px;height:10px">6</div>
<div class="rh" style="top:87.5px;height:10px">7</div>
<div class="rh" style="top:97.5px;height:10px">8</div>
<div class="rh" style="top:107.5px;height:10px">9</div>
<div class="rh" style="top:117.5px;height:10px">10</div>
<div class="rh" style="top:127.5px;height:10px">11</div>
<div class="rh" style="top:137.5px;height:10px">12</div>
<div class="rh" style="top:147.5px;height:10px">13</div>
<div class="rh" style="top:157.5px;height:10px">14</div>
<div class="rh" style="top:167.5px;height:10px">15</div>
<div class="rh" style="top:177.5px;height:10px">16</div>
<div class="rh" style="top:187.5px;height:10px">17</div>
<div class="rh" style="top:197.5px;height:10px">18</div>
<div class="rh" style="top:207.5px;height:10px">19</div>
<div class="rh" style="top:217.5px;height:10px">20</div>
<div class="rh" style="top:227.5px;height:10px">21</div>
<div class="rh" style="top:237.5px;height:10px">22</div>
<div class="rh" style="top:247.5px;height:10px">23</div>
<div class="rh" style="top:257.5px;height:10px">24</div>
<div class="rh" style="top:267.5px;height:10px">25</div>
<div class="rh" style="top:277.5px;height:10px">26</div>
<div class="rh" style="top:287.5px;height:10px">27</div>
<div class="rh" style="top:297.5px;height:10px">28</div>
<div class="rh" style="top:307.5px;height:10px">29</div>
<div class="rh" style="top:317.5px;height:10px">30</div>
<div class="vl lg" style="left:73.0px;top:7.5px;height:41.0px"></div>
<div class="vl lg" style="left:175.0px;top:7.5px;height:41.0px"></div>
<div class="vl lg" style="left:237.0px;top:7.5px;height:41.0px"></div>
<div class="vl lg" style="left:297.5px;top:7.5px;height:41.0px"></div>
<div class="vl lg" style="left:346.5px;top:7.5px;height:41.0px"></div>
<div class="vl lg" style="left:395.0px;top:7.5px;height:41.0px"></div>
<div class="vl lg" style="left:457.5px;top:7.5px;height:41.0px"></div>
<div class="vl lg" style="left:536.5px;top:7.5px;height:41.0px"></div>
<div class="vl lg" style="left:616.0px;top:7.5px;height:41.0px"></div>
<div class="vl lg" style="left:697.0px;top:7.5px;height:41.0px"></div>
<div class="vl lg" style="left:774.0px;top:7.5px;height:41.0px"></div>
<div class="vl lg" style="left:848.0px;top:7.5px;height:41.0px"></div>
<div class="vl lg" style="left:930.0px;top:7.5px;height:41.0px"></div>
<div class="hl lg" style="top:18.0px"></div>
<div class="hl lg" style="top:28.0px"></div>
<div class="hl lg" style="top:38.0px"></div>
<div class="hl dk thick" style="top:48.0px"></div>
<div class="hl dk thick" style="top:77.0px"></div>
<div class="hl dk" style="top:87.0px"></div>
<div class="hl dk" style="top:97.0px"></div>
<div class="hl dk" style="top:107.0px"></div>
<div class="hl dk" style="top:117.0px"></div>
<div class="hl dk" style="top:127.0px"></div>
<div class="hl dk" style="top:137.0px"></div>
<div class="hl dk" style="top:147.0px"></div>
<div class="hl dk" style="top:157.0px"></div>
<div class="hl dk" style="top:167.0px"></div>
<div class="hl dk" style="top:177.0px"></div>
<div class="hl dk" style="top:187.0px"></div>
<div class="hl dk" style="top:197.0px"></div>
<div class="hl dk" style="top:207.0px"></div>
<div class="hl dk" style="top:217.0px"></div>
<div class="hl dk" style="top:227.0px"></div>
<div class="hl dk" style="top:237.0px"></div>
<div class="hl dk" style="top:247.0px"></div>
<div class="hl dk" style="top:257.0px"></div>
<div class="hl dk" style="top:267.0px"></div>
<div class="hl dk" style="top:277.0px"></div>
<div class="hl dk" style="top:287.0px"></div>
<div class="hl dk" style="top:297.0px"></div>
<div class="hl dk" style="top:307.0px"></div>
<div class="hl dk" style="top:317.0px"></div>
<div class="vl dv" style="left:12.0px;top:48.5px;height:400px"></div>
<div class="vl dv" style="left:73.0px;top:48.5px;height:400px"></div>
<div class="vl dv" style="left:175.0px;top:48.5px;height:400px"></div>
<div class="vl dv" style="left:237.0px;top:48.5px;height:400px"></div>
<div class="vl dv" style="left:297.5px;top:48.5px;height:400px"></div>
<div class="vl dv" style="left:346.5px;top:48.5px;height:400px"></div>
<div class="vl dv" style="left:395.0px;top:48.5px;height:400px"></div>
<div class="vl dv" style="left:457.5px;top:48.5px;height:400px"></div>
<div class="vl dv" style="left:536.5px;top:48.5px;height:400px"></div>
<div class="vl dv" style="left:616.0px;top:48.5px;height:400px"></div>
<div class="vl dv" style="left:697.0px;top:48.5px;height:400px"></div>
<div class="vl dv" style="left:774.0px;top:48.5px;height:400px"></div>
<div class="vl dv" style="left:848.0px;top:48.5px;height:400px"></div>
<div class="vl dv" style="left:930.0px;top:48.5px;height:400px"></div>
<div class="t bi" style="left:14.0px;top:8.5px">СМАРТ Кронус Україна</div>
<div class="t bi" style="left:14.0px;top:18.5px">Код ЄДРПОУ: 34554363</div>
<div class="hd" style="left:12.5px;width:61.0px;top:48.5px;height:29px"><span>Табельний номер</span></div>
<div class="hd" style="left:73.5px;width:102.0px;top:48.5px;height:29px"><span>Повна назва</span></div>
<div class="hd" style="left:175.5px;width:62.0px;top:48.5px;height:29px"><span>Дата народження</span></div>
<div class="hd" style="left:237.5px;width:60.5px;top:48.5px;height:29px"><span>ІПН</span></div>
<div class="hd" style="left:298.0px;width:49.0px;top:48.5px;height:29px"><span>Телефон</span></div>
<div class="hd" style="left:347.0px;width:48.5px;top:48.5px;height:29px"><span>E-mail</span></div>
<div class="hd" style="left:395.5px;width:62.5px;top:48.5px;height:29px"><span>Документ, що<br>посвідчує особу</span></div>
<div class="hd" style="left:458.0px;width:79.0px;top:48.5px;height:29px"><span>Адреса реєстрації</span></div>
<div class="hd" style="left:537.0px;width:79.5px;top:48.5px;height:29px"><span>Адреса проживання</span></div>
<div class="hd" style="left:616.5px;width:81.0px;top:48.5px;height:29px"><span>Дата прийому</span></div>
<div class="hd" style="left:697.5px;width:77.0px;top:48.5px;height:29px"><span>Тип договору</span></div>
<div class="hd" style="left:774.5px;width:74.0px;top:48.5px;height:29px"><span>Посада</span></div>
<div class="hd" style="left:848.5px;width:82.0px;top:48.5px;height:29px"><span>Підрозділ</span></div>
<div class="hd" style="left:930.5px;width:80.5px;top:48.5px;height:29px"><span>Графік роботи</span></div>
<div class="c" style="left:14.3px;width:58.7px;top:77.5px">СПР00001</div>
<div class="c" style="left:75.3px;width:99.7px;top:77.5px">Рабченюк Віктор Андрійович</div>
<div class="c" style="left:177.3px;width:59.7px;top:77.5px">11.11.1988</div>
<div class="c" style="left:239.3px;width:58.2px;top:77.5px">3245712345</div>
<div class="tri" style="left:238.0px;top:78.0px"></div>
<div class="c" style="left:299.8px;width:46.7px;top:77.5px">456-59-68</div>
<div class="c" style="left:348.8px;width:46.2px;top:77.5px">lishe@smart-it.com</div>
<div class="c" style="left:459.8px;width:76.7px;top:77.5px">03000, Україна, м. Київ, вул.</div>
<div class="c" style="left:538.8px;width:77.2px;top:77.5px">03000, Україна, м. Київ, вул.</div>
<div class="c" style="left:618.3px;width:78.7px;top:77.5px">01.01.2021</div>
<div class="c" style="left:699.3px;width:74.7px;top:77.5px">Трудовий договір</div>
<div class="c" style="left:776.3px;width:71.7px;top:77.5px">Економіст</div>
<div class="c" style="left:850.3px;width:79.7px;top:77.5px">Департамент прямого продажу</div>
<div class="c" style="left:932.3px;width:78.2px;top:77.5px">ЗМІНА</div>
<div class="c" style="left:14.3px;width:58.7px;top:87.5px">СПР00002</div>
<div class="c" style="left:75.3px;width:99.7px;top:87.5px">Петрова Валентина Іванівна</div>
<div class="c" style="left:177.3px;width:59.7px;top:87.5px">10.11.1982</div>
<div class="c" style="left:239.3px;width:58.2px;top:87.5px">3026409876</div>
<div class="tri" style="left:238.0px;top:88.0px"></div>
<div class="c" style="left:299.8px;width:46.7px;top:87.5px">123 12 13</div>
<div class="c" style="left:348.8px;width:46.2px;top:87.5px">lishe@smart-it.com</div>
<div class="c" style="left:538.8px;width:77.2px;top:87.5px">м. , вул.</div>
<div class="c" style="left:618.3px;width:78.7px;top:87.5px">01.01.2021</div>
<div class="c" style="left:699.3px;width:74.7px;top:87.5px">Трудовий договір</div>
<div class="c" style="left:776.3px;width:71.7px;top:87.5px">Економіст</div>
<div class="c" style="left:850.3px;width:79.7px;top:87.5px">Менеджмент</div>
<div class="c" style="left:932.3px;width:78.2px;top:87.5px">ОСНОВНИЙ</div>
<div class="c" style="left:14.3px;width:58.7px;top:97.5px">СПР00003</div>
<div class="c" style="left:75.3px;width:99.7px;top:97.5px">Руднєв Ігорь Миколайович</div>
<div class="c" style="left:177.3px;width:59.7px;top:97.5px">30.12.1962</div>
<div class="c" style="left:239.3px;width:58.2px;top:97.5px">2300909622</div>
<div class="tri" style="left:238.0px;top:98.0px"></div>
<div class="c" style="left:299.8px;width:46.7px;top:97.5px">111-11-11</div>
<div class="c" style="left:348.8px;width:46.2px;top:97.5px">lishe@smart-it.com</div>
<div class="c" style="left:459.8px;width:76.7px;top:97.5px">м. , вул.</div>
<div class="c" style="left:618.3px;width:78.7px;top:97.5px">01.01.2021</div>
<div class="c" style="left:699.3px;width:74.7px;top:97.5px">Трудовий договір</div>
<div class="c" style="left:776.3px;width:71.7px;top:97.5px">Генеральний директор</div>
<div class="c" style="left:850.3px;width:79.7px;top:97.5px">Менеджмент</div>
<div class="c" style="left:932.3px;width:78.2px;top:97.5px">ОСНОВНИЙ</div>
<div class="c" style="left:14.3px;width:58.7px;top:107.5px">СПР00004</div>
<div class="c" style="left:75.3px;width:99.7px;top:107.5px">Петрова Ніна Викторівна</div>
<div class="c" style="left:177.3px;width:59.7px;top:107.5px">24.03.1978</div>
<div class="c" style="left:239.3px;width:58.2px;top:107.5px">2857265748</div>
<div class="tri" style="left:238.0px;top:108.0px"></div>
<div class="c" style="left:299.8px;width:46.7px;top:107.5px">456-59-68</div>
<div class="c" style="left:397.3px;width:60.2px;top:107.5px">Паспорт АН 234567, виданий</div>
<div class="c" style="left:618.3px;width:78.7px;top:107.5px">01.01.2021</div>
<div class="c" style="left:699.3px;width:74.7px;top:107.5px">Трудовий договір</div>
<div class="c" style="left:776.3px;width:71.7px;top:107.5px">Економіст</div>
<div class="c" style="left:850.3px;width:79.7px;top:107.5px">Департамент прямого продажу</div>
<div class="c" style="left:932.3px;width:78.2px;top:107.5px">ЗМІНА</div>
<div class="c" style="left:14.3px;width:58.7px;top:117.5px">СПР00005</div>
<div class="c" style="left:75.3px;width:99.7px;top:117.5px">Підвальний Віктор Сергійович</div>
<div class="c" style="left:177.3px;width:59.7px;top:117.5px">22.03.1980</div>
<div class="c" style="left:239.3px;width:58.2px;top:117.5px">2930109624</div>
<div class="tri" style="left:238.0px;top:118.0px"></div>
<div class="c" style="left:299.8px;width:46.7px;top:117.5px">758-22-45</div>
<div class="c" style="left:459.8px;width:76.7px;top:117.5px">Україна, м. Одеса, вул.</div>
<div class="c" style="left:538.8px;width:77.2px;top:117.5px">КИЇВ, Україна, м. Київ, вул.</div>
<div class="c" style="left:618.3px;width:78.7px;top:117.5px">01.01.2021</div>
<div class="c" style="left:699.3px;width:74.7px;top:117.5px">Трудовий договір</div>
<div class="c" style="left:776.3px;width:71.7px;top:117.5px">Економіст</div>
<div class="c" style="left:850.3px;width:79.7px;top:117.5px">Менеджмент</div>
<div class="c" style="left:932.3px;width:78.2px;top:117.5px">ОСНОВНИЙ</div>
<div class="c" style="left:14.3px;width:58.7px;top:127.5px">СПР00006</div>
<div class="c" style="left:75.3px;width:99.7px;top:127.5px">Яременко Світлана Євгенівна</div>
<div class="c" style="left:177.3px;width:59.7px;top:127.5px">24.08.1978</div>
<div class="c" style="left:239.3px;width:58.2px;top:127.5px">2872509625</div>
<div class="tri" style="left:238.0px;top:128.0px"></div>
<div class="c" style="left:299.8px;width:46.7px;top:127.5px">456-23-75</div>
<div class="c" style="left:538.8px;width:77.2px;top:127.5px">03022, Україна, м. Маріуполь</div>
<div class="c" style="left:618.3px;width:78.7px;top:127.5px">01.01.2021</div>
<div class="c" style="left:699.3px;width:74.7px;top:127.5px">Трудовий договір</div>
<div class="c" style="left:776.3px;width:71.7px;top:127.5px">Менеджер із збуту</div>
<div class="c" style="left:850.3px;width:79.7px;top:127.5px">Виробничий відділ</div>
<div class="c" style="left:932.3px;width:78.2px;top:127.5px">ОСНОВНИЙ</div>
<div class="c" style="left:14.3px;width:58.7px;top:137.5px">СПР00007</div>
<div class="c" style="left:75.3px;width:99.7px;top:137.5px">Хлусова Ольга Юріївна</div>
<div class="c" style="left:177.3px;width:59.7px;top:137.5px">09.04.1965</div>
<div class="c" style="left:239.3px;width:58.2px;top:137.5px">2384009626</div>
<div class="tri" style="left:238.0px;top:138.0px"></div>
<div class="c" style="left:299.8px;width:46.7px;top:137.5px">123-41-23</div>
<div class="c" style="left:618.3px;width:78.7px;top:137.5px">01.01.2021</div>
<div class="c" style="left:699.3px;width:74.7px;top:137.5px">Трудовий договір</div>
<div class="c" style="left:776.3px;width:71.7px;top:137.5px">Економіст</div>
<div class="c" style="left:850.3px;width:79.7px;top:137.5px">Менеджмент з продажів</div>
<div class="c" style="left:932.3px;width:78.2px;top:137.5px">ОСНОВНИЙ</div>
<div class="c" style="left:14.3px;width:58.7px;top:147.5px">СПР00008</div>
<div class="c" style="left:75.3px;width:99.7px;top:147.5px">Баканова Світлана Євгенівна</div>
<div class="c" style="left:177.3px;width:59.7px;top:147.5px">01.01.1970</div>
<div class="c" style="left:239.3px;width:58.2px;top:147.5px">3134503127</div>
<div class="tri" style="left:238.0px;top:148.0px"></div>
<div class="c" style="left:299.8px;width:46.7px;top:147.5px">798-79-57</div>
<div class="c" style="left:397.3px;width:60.2px;top:147.5px">Паспорт АА 345678, виданий</div>
<div class="c" style="left:618.3px;width:78.7px;top:147.5px">01.01.2021</div>
<div class="c" style="left:699.3px;width:74.7px;top:147.5px">Трудовий договір</div>
<div class="c" style="left:776.3px;width:71.7px;top:147.5px">Менеджер із збуту</div>
<div class="c" style="left:850.3px;width:79.7px;top:147.5px">Виробничий відділ</div>
<div class="c" style="left:932.3px;width:78.2px;top:147.5px">ОСНОВНИЙ</div>
<div class="c" style="left:14.3px;width:58.7px;top:157.5px">СПР00009</div>
<div class="c" style="left:75.3px;width:99.7px;top:157.5px">Кронова Ганна Сергіївна</div>
<div class="c" style="left:177.3px;width:59.7px;top:157.5px">13.06.1991</div>
<div class="c" style="left:239.3px;width:58.2px;top:157.5px">3340121234</div>
<div class="tri" style="left:238.0px;top:158.0px"></div>
<div class="c" style="left:299.8px;width:46.7px;top:157.5px">412-41-24</div>
<div class="c" style="left:397.3px;width:60.2px;top:157.5px">Паспорт КЕ 122123, виданий</div>
<div class="c" style="left:459.8px;width:76.7px;top:157.5px">03000, Україна, м. Київ, вул.</div>
<div class="c" style="left:618.3px;width:78.7px;top:157.5px">01.01.2021</div>
<div class="c" style="left:699.3px;width:74.7px;top:157.5px">Трудовий договір</div>
<div class="c" style="left:776.3px;width:71.7px;top:157.5px">Консультант</div>
<div class="c" style="left:850.3px;width:79.7px;top:157.5px">Менеджмент</div>
<div class="c" style="left:932.3px;width:78.2px;top:157.5px">ОСНОВНИЙ</div>
<div class="c" style="left:14.3px;width:58.7px;top:167.5px">СПР00010</div>
<div class="c" style="left:75.3px;width:99.7px;top:167.5px">Борисова Ніна Митрофанівна</div>
<div class="c" style="left:177.3px;width:59.7px;top:167.5px">15.04.1983</div>
<div class="c" style="left:239.3px;width:58.2px;top:167.5px">3042009629</div>
<div class="tri" style="left:238.0px;top:168.0px"></div>
<div class="c" style="left:299.8px;width:46.7px;top:167.5px">555-55-55</div>
<div class="c" style="left:397.3px;width:60.2px;top:167.5px">ID-картка  006965512</div>
<div class="c" style="left:618.3px;width:78.7px;top:167.5px">01.01.2021</div>
<div class="c" style="left:699.3px;width:74.7px;top:167.5px">Трудовий договір</div>
<div class="c" style="left:776.3px;width:71.7px;top:167.5px">Консультант</div>
<div class="c" style="left:850.3px;width:79.7px;top:167.5px">Департамент сервісу та діагн</div>
<div class="c" style="left:932.3px;width:78.2px;top:167.5px">ОСНОВНИЙ</div>
<div class="c" style="left:14.3px;width:58.7px;top:177.5px">СПР00011</div>
<div class="c" style="left:75.3px;width:99.7px;top:177.5px">Зелений Андрій Васильович</div>
<div class="c" style="left:177.3px;width:59.7px;top:177.5px">14.08.1984</div>
<div class="c" style="left:239.3px;width:58.2px;top:177.5px">3090709630</div>
<div class="tri" style="left:238.0px;top:178.0px"></div>
<div class="c" style="left:299.8px;width:46.7px;top:177.5px">423-42-44</div>
<div class="c" style="left:538.8px;width:77.2px;top:177.5px">03000, Україна, м. Київ, вул.</div>
<div class="c" style="left:618.3px;width:78.7px;top:177.5px">01.01.2021</div>
<div class="c" style="left:699.3px;width:74.7px;top:177.5px">Трудовий договір</div>
<div class="c" style="left:776.3px;width:71.7px;top:177.5px">Менеджер із збуту</div>
<div class="c" style="left:850.3px;width:79.7px;top:177.5px">Виробничий відділ</div>
<div class="c" style="left:932.3px;width:78.2px;top:177.5px">ОСНОВНИЙ</div>
<div class="c" style="left:14.3px;width:58.7px;top:187.5px">СПР00012</div>
<div class="c" style="left:75.3px;width:99.7px;top:187.5px">Радченко Олексій Володимирович</div>
<div class="c" style="left:177.3px;width:59.7px;top:187.5px">26.05.1971</div>
<div class="c" style="left:239.3px;width:58.2px;top:187.5px">2607821159</div>
<div class="tri" style="left:238.0px;top:188.0px"></div>
<div class="c" style="left:299.8px;width:46.7px;top:187.5px">543 55 44</div>
<div class="c" style="left:397.3px;width:60.2px;top:187.5px">Паспорт ет 12345, виданий</div>
<div class="c" style="left:618.3px;width:78.7px;top:187.5px">01.01.2021</div>
<div class="c" style="left:699.3px;width:74.7px;top:187.5px">Трудовий договір</div>
<div class="c" style="left:776.3px;width:71.7px;top:187.5px">Головний бухгалтер</div>
<div class="c" style="left:850.3px;width:79.7px;top:187.5px">Менеджмент</div>
<div class="c" style="left:932.3px;width:78.2px;top:187.5px">ОСНОВНИЙ</div>
<div class="c" style="left:14.3px;width:58.7px;top:197.5px">СПР00013</div>
<div class="c" style="left:75.3px;width:99.7px;top:197.5px">Баканова Світлана Євгенівна</div>
<div class="c" style="left:177.3px;width:59.7px;top:197.5px">01.01.1970</div>
<div class="c" style="left:239.3px;width:58.2px;top:197.5px">3134503127</div>
<div class="tri" style="left:238.0px;top:198.0px"></div>
<div class="c" style="left:299.8px;width:46.7px;top:197.5px">798-79-57</div>
<div class="c" style="left:397.3px;width:60.2px;top:197.5px">Паспорт АА 345678, виданий</div>
<div class="c" style="left:618.3px;width:78.7px;top:197.5px">01.01.2021</div>
<div class="c" style="left:699.3px;width:74.7px;top:197.5px">Трудовий договір</div>
<div class="c" style="left:776.3px;width:71.7px;top:197.5px">Економіст</div>
<div class="c" style="left:850.3px;width:79.7px;top:197.5px">Департамент роздрібних продаж</div>
<div class="c" style="left:932.3px;width:78.2px;top:197.5px">ОСНОВНИЙ</div>
<div class="c" style="left:14.3px;width:58.7px;top:207.5px">СПР00016</div>
<div class="c" style="left:75.3px;width:99.7px;top:207.5px">Волошенко Олександр Олександрович</div>
<div class="c" style="left:177.3px;width:59.7px;top:207.5px">12.06.1973</div>
<div class="c" style="left:239.3px;width:58.2px;top:207.5px">2682603123</div>
<div class="tri" style="left:238.0px;top:208.0px"></div>
<div class="c" style="left:299.8px;width:46.7px;top:207.5px">123 23 23</div>
<div class="c" style="left:397.3px;width:60.2px;top:207.5px">Паспорт ук 43212, виданий</div>
<div class="c" style="left:618.3px;width:78.7px;top:207.5px">01.01.2021</div>
<div class="c" style="left:699.3px;width:74.7px;top:207.5px">Цивільний договір</div>
<div class="c" style="left:776.3px;width:71.7px;top:207.5px">ЦПХ</div>
<div class="c" style="left:850.3px;width:79.7px;top:207.5px">Договори ЦПХ</div>
<div class="c" style="left:932.3px;width:78.2px;top:207.5px">ОСНОВНИЙ</div>
<div class="c" style="left:14.3px;width:58.7px;top:217.5px">СПР00017</div>
<div class="c" style="left:75.3px;width:99.7px;top:217.5px">Гроза Валерій Петрович</div>
<div class="c" style="left:177.3px;width:59.7px;top:217.5px">11.10.1985</div>
<div class="c" style="left:239.3px;width:58.2px;top:217.5px">3133032123</div>
<div class="tri" style="left:238.0px;top:218.0px"></div>
<div class="c" style="left:299.8px;width:46.7px;top:217.5px">456-59-68</div>
<div class="c" style="left:348.8px;width:46.2px;top:217.5px">grosa@smart-it.com</div>
<div class="c" style="left:397.3px;width:60.2px;top:217.5px">Паспорт не 12342, виданий</div>
<div class="c" style="left:538.8px;width:77.2px;top:217.5px">Україна, м. Киев, вул. ,д.1</div>
<div class="c" style="left:618.3px;width:78.7px;top:217.5px">01.08.2021</div>
<div class="c" style="left:699.3px;width:74.7px;top:217.5px">Трудовий договір</div>
<div class="c" style="left:776.3px;width:71.7px;top:217.5px">Менеджер із збуту</div>
<div class="c" style="left:850.3px;width:79.7px;top:217.5px">Виробничий відділ</div>
<div class="c" style="left:932.3px;width:78.2px;top:217.5px">ОСНОВНИЙ</div>
<div class="c" style="left:14.3px;width:58.7px;top:227.5px">СПР00018</div>
<div class="c" style="left:75.3px;width:99.7px;top:227.5px">Яременко Світлана Євгенівна</div>
<div class="c" style="left:177.3px;width:59.7px;top:227.5px">24.08.1978</div>
<div class="c" style="left:239.3px;width:58.2px;top:227.5px">2872509625</div>
<div class="tri" style="left:238.0px;top:228.0px"></div>
<div class="c" style="left:299.8px;width:46.7px;top:227.5px">456-23-75</div>
<div class="c" style="left:538.8px;width:77.2px;top:227.5px">03022, Україна, м. Маріуполь</div>
<div class="c" style="left:618.3px;width:78.7px;top:227.5px">01.08.2021</div>
<div class="c" style="left:699.3px;width:74.7px;top:227.5px">Цивільний договір</div>
<div class="c" style="left:776.3px;width:71.7px;top:227.5px">ЦПХ</div>
<div class="c" style="left:850.3px;width:79.7px;top:227.5px">Договори ЦПХ</div>
<div class="c" style="left:932.3px;width:78.2px;top:227.5px">ОСНОВНИЙ</div>
<div class="c" style="left:14.3px;width:58.7px;top:237.5px">СПР00021</div>
<div class="c" style="left:75.3px;width:99.7px;top:237.5px">Кошур Іван Петрович</div>
<div class="c" style="left:177.3px;width:59.7px;top:237.5px">11.11.1989</div>
<div class="c" style="left:239.3px;width:58.2px;top:237.5px">3282212121</div>
<div class="tri" style="left:238.0px;top:238.0px"></div>
<div class="c" style="left:299.8px;width:46.7px;top:237.5px">456-59-68</div>
<div class="c" style="left:538.8px;width:77.2px;top:237.5px">01000, , м. Киев, вул. ,буд.</div>
<div class="c" style="left:618.3px;width:78.7px;top:237.5px">11.08.2021</div>
<div class="c" style="left:699.3px;width:74.7px;top:237.5px">Трудовий договір</div>
<div class="c" style="left:776.3px;width:71.7px;top:237.5px">Економіст</div>
<div class="c" style="left:850.3px;width:79.7px;top:237.5px">Департамент прямого продажу</div>
<div class="c" style="left:932.3px;width:78.2px;top:237.5px">ЗМІНА</div>
<div class="c" style="left:14.3px;width:58.7px;top:247.5px">СПР00024</div>
<div class="c" style="left:75.3px;width:99.7px;top:247.5px">Листопад Петро Петрович</div>
<div class="c" style="left:177.3px;width:59.7px;top:247.5px">01.01.1960</div>
<div class="c" style="left:239.3px;width:58.2px;top:247.5px">2191512821</div>
<div class="tri" style="left:238.0px;top:248.0px"></div>
<div class="c" style="left:299.8px;width:46.7px;top:247.5px">456-59-68</div>
<div class="c" style="left:538.8px;width:77.2px;top:247.5px">Україна, м. Киев, вул. ,д.1</div>
<div class="c" style="left:618.3px;width:78.7px;top:247.5px">01.11.2021</div>
<div class="c" style="left:699.3px;width:74.7px;top:247.5px">Трудовий договір</div>
<div class="c" style="left:776.3px;width:71.7px;top:247.5px">Фахівець з маркетингу</div>
<div class="c" style="left:850.3px;width:79.7px;top:247.5px">Виробничий відділ</div>
<div class="c" style="left:932.3px;width:78.2px;top:247.5px">ОСНОВНИЙ</div>
<div class="c" style="left:14.3px;width:58.7px;top:257.5px">СПР00025</div>
<div class="c" style="left:75.3px;width:99.7px;top:257.5px">Вуйко Ірина Миколаївна</div>
<div class="c" style="left:177.3px;width:59.7px;top:257.5px">01.01.1985</div>
<div class="c" style="left:239.3px;width:58.2px;top:257.5px">3104712821</div>
<div class="tri" style="left:238.0px;top:258.0px"></div>
<div class="c" style="left:299.8px;width:46.7px;top:257.5px">456-59-68</div>
<div class="c" style="left:538.8px;width:77.2px;top:257.5px">м. Киев, вул. ,д.1, к.ф, кв.</div>
<div class="c" style="left:618.3px;width:78.7px;top:257.5px">01.11.2021</div>
<div class="c" style="left:699.3px;width:74.7px;top:257.5px">Трудовий договір</div>
<div class="c" style="left:776.3px;width:71.7px;top:257.5px">Економіст</div>
<div class="c" style="left:850.3px;width:79.7px;top:257.5px">Виробничий відділ</div>
<div class="c" style="left:932.3px;width:78.2px;top:257.5px">ОСНОВНИЙ</div>
<div class="c" style="left:14.3px;width:58.7px;top:267.5px">СПР00026</div>
<div class="c" style="left:75.3px;width:99.7px;top:267.5px">Петришин Максим Александрович</div>
<div class="c" style="left:177.3px;width:59.7px;top:267.5px">01.01.1974</div>
<div class="c" style="left:299.8px;width:46.7px;top:267.5px">456-59-69</div>
<div class="c" style="left:618.3px;width:78.7px;top:267.5px">01.10.2021</div>
<div class="c" style="left:699.3px;width:74.7px;top:267.5px">Трудовий договір</div>
<div class="c" style="left:776.3px;width:71.7px;top:267.5px">Оператор комп'ютерного набору</div>
<div class="c" style="left:850.3px;width:79.7px;top:267.5px">Канцелярія</div>
<div class="c" style="left:932.3px;width:78.2px;top:267.5px">ОСНОВНИЙ</div>
<div class="c" style="left:14.3px;width:58.7px;top:277.5px">СПР00030</div>
<div class="c" style="left:75.3px;width:99.7px;top:277.5px">Стрільчук Олег Олегович</div>
<div class="c" style="left:177.3px;width:59.7px;top:277.5px">09.09.1989</div>
<div class="c" style="left:239.3px;width:58.2px;top:277.5px">3275994949</div>
<div class="tri" style="left:238.0px;top:278.0px"></div>
<div class="c" style="left:299.8px;width:46.7px;top:277.5px">456-59-68</div>
<div class="c" style="left:618.3px;width:78.7px;top:277.5px">01.09.2021</div>
<div class="c" style="left:699.3px;width:74.7px;top:277.5px">Трудовий договір</div>
<div class="c" style="left:776.3px;width:71.7px;top:277.5px">Консультант з економічних</div>
<div class="c" style="left:850.3px;width:79.7px;top:277.5px">Виробничий відділ</div>
<div class="c" style="left:932.3px;width:78.2px;top:277.5px">ОСНОВНИЙ</div>
<div class="c" style="left:14.3px;width:58.7px;top:287.5px">СПР00032</div>
<div class="c" style="left:75.3px;width:99.7px;top:287.5px">Борисов Віктор Степанович</div>
<div class="c" style="left:177.3px;width:59.7px;top:287.5px">01.01.1960</div>
<div class="c" style="left:239.3px;width:58.2px;top:287.5px">2191567348</div>
<div class="tri" style="left:238.0px;top:288.0px"></div>
<div class="c" style="left:618.3px;width:78.7px;top:287.5px">01.01.2022</div>
<div class="c" style="left:699.3px;width:74.7px;top:287.5px">Трудовий договір</div>
<div class="c" style="left:776.3px;width:71.7px;top:287.5px">Консультант з економічних</div>
<div class="c" style="left:850.3px;width:79.7px;top:287.5px">Менеджмент</div>
<div class="c" style="left:932.3px;width:78.2px;top:287.5px">ОСНОВНИЙ</div>
<div class="c" style="left:14.3px;width:58.7px;top:297.5px">СПР00033</div>
<div class="c" style="left:75.3px;width:99.7px;top:297.5px">Тарасова Вікторія Іванівна</div>
<div class="c" style="left:177.3px;width:59.7px;top:297.5px">19.01.2021</div>
<div class="c" style="left:299.8px;width:46.7px;top:297.5px">456-59-71</div>
<div class="c" style="left:618.3px;width:78.7px;top:297.5px">01.02.2022</div>
<div class="c" style="left:699.3px;width:74.7px;top:297.5px">Трудовий договір</div>
<div class="c" style="left:776.3px;width:71.7px;top:297.5px">Консультант з економічних</div>
<div class="c" style="left:850.3px;width:79.7px;top:297.5px">Виробничий відділ</div>
<div class="c" style="left:932.3px;width:78.2px;top:297.5px">ОСНОВНИЙ</div>
<div class="c" style="left:14.3px;width:58.7px;top:307.5px">СПР2200003</div>
<div class="c" style="left:75.3px;width:99.7px;top:307.5px">Павлюченко Максим Максимович</div>
<div class="c" style="left:177.3px;width:59.7px;top:307.5px">01.01.1970</div>
<div class="c" style="left:239.3px;width:58.2px;top:307.5px">2556812321</div>
<div class="tri" style="left:238.0px;top:308.0px"></div>
<div class="c" style="left:618.3px;width:78.7px;top:307.5px">01.01.2022</div>
<div class="c" style="left:699.3px;width:74.7px;top:307.5px">Трудовий договір</div>
<div class="c" style="left:776.3px;width:71.7px;top:307.5px">Столяр судновий</div>
<div class="c" style="left:850.3px;width:79.7px;top:307.5px">Менеджмент</div>
<div class="c" style="left:932.3px;width:78.2px;top:307.5px">ОСНОВНИЙ</div>
<div class="c" style="left:14.3px;width:58.7px;top:317.5px">СПР2200004</div>
<div class="c" style="left:75.3px;width:99.7px;top:317.5px">Якименко Максим Петрович</div>
<div class="c" style="left:177.3px;width:59.7px;top:317.5px">01.01.1970</div>
<div class="c" style="left:239.3px;width:58.2px;top:317.5px">2556812322</div>
<div class="tri" style="left:238.0px;top:318.0px"></div>
<div class="c" style="left:618.3px;width:78.7px;top:317.5px">01.01.2022</div>
<div class="c" style="left:699.3px;width:74.7px;top:317.5px">Трудовий договір</div>
<div class="c" style="left:776.3px;width:71.7px;top:317.5px">Консультант з економічних</div>
<div class="c" style="left:850.3px;width:79.7px;top:317.5px">Виробничий відділ</div>
<div class="c" style="left:932.3px;width:78.2px;top:317.5px">ОСНОВНИЙ</div>
<div style="left:174.8px;top:47.7px;width:63.4px;height:30.6px;border:1.4px solid #2d7a55"></div>
<div style="left:235.5px;top:75.5px;width:4px;height:4px;background:#1f6e45;border:0.6px solid #fff"></div>
<div style="left:239.5px;top:27.0px;width:20px;height:19.5px;border-radius:4px;background:#fff;border:1px solid #d8d8d8;box-shadow:0 0 1px rgba(0,0,0,.15)"></div>
<svg style="position:absolute;left:243.0px;top:30.0px" width="13" height="13" viewBox="0 0 13 13"><path d="M7 1.5l1 2 2 1-2 1-1 2-1-2-2-1 2-1z" fill="#333"/><circle cx="10.5" cy="8" r="1.2" fill="#333"/><path d="M2 10l3-3M2.5 12l3-3M4 8.5" stroke="#555" stroke-width=".9" stroke-dasharray="1 .8"/></svg>
  </div>
</div>
</body></html>
